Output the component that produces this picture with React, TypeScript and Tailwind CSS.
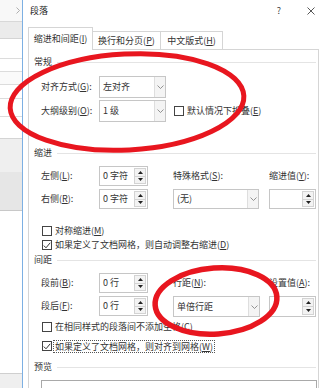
import React from "react";

const U = ({ c }: { c: string }) => (
  <span className="underline decoration-[0.5px] underline-offset-[1px]">{c}</span>
);

function Chevron() {
  return (
    <svg width="7" height="4" viewBox="0 0 7 4">
      <polyline points="0.5,0.5 3.5,3.5 6.5,0.5" fill="none" stroke="#7a7a7a" strokeWidth="0.8" />
    </svg>
  );
}

function Dropdown({ value, className }: { value: string; className: string }) {
  return (
    <div className={`flex border border-[#c6c6c6] bg-white ${className}`}>
      <div className="flex-1 flex items-center pl-[3px] whitespace-nowrap">{value}</div>
      <div className="w-[11px] flex items-center justify-center border-l border-[#dedede] bg-[#f4f4f4]">
        <Chevron />
      </div>
    </div>
  );
}

function Spin({ value, className }: { value: string; className: string }) {
  return (
    <div className={`flex border border-[#c6c6c6] bg-white ${className}`}>
      <div className="flex-1 flex items-center pl-[3px] whitespace-nowrap">{value}</div>
      <div className="w-[12px] my-[1px] mr-[1px] flex flex-col border border-[#d3d3d3] bg-[#f3f3f3]">
        <div className="flex-1 flex items-center justify-center border-b border-[#d3d3d3]">
          <svg width="5" height="3" viewBox="0 0 5 3">
            <polygon points="2.5,0 5,3 0,3" fill="#222" />
          </svg>
        </div>
        <div className="flex-1 flex items-center justify-center">
          <svg width="5" height="3" viewBox="0 0 5 3">
            <polygon points="0,0 5,0 2.5,3" fill="#222" />
          </svg>
        </div>
      </div>
    </div>
  );
}

function Check({ checked }: { checked?: boolean }) {
  return (
    <div className="w-[10px] h-[10px] shrink-0 border border-[#444] bg-white flex items-center justify-center">
      {checked && (
        <svg width="8" height="7" viewBox="0 0 8 7">
          <polyline points="0.8,3.6 3,5.8 7.2,0.8" fill="none" stroke="#333" strokeWidth="1" />
        </svg>
      )}
    </div>
  );
}

function Section({ title, className }: { title: string; className: string }) {
  return (
    <div className={`flex items-center pl-[5px] pr-[2px] ${className}`}>
      <span className="text-[#333]">{title}</span>
      <div className="flex-1 h-px bg-[#e4e4e4] ml-[5px]" />
    </div>
  );
}

function LeftStrip() {
  return (
    <div className="w-[22px] shrink-0 flex flex-col bg-[#f0f0f0]">
      <div className="h-[22px] shrink-0 bg-[#f8f8f8] border-b border-[#d8d8d8] flex items-center justify-end pr-[2px]">
        <svg width="4" height="7" viewBox="0 0 4 7">
          <polyline points="0.5,0.5 3.5,3.5 0.5,6.5" fill="none" stroke="#9a9a9a" strokeWidth="0.8" />
        </svg>
      </div>
      <div className="h-[17px] shrink-0 bg-[#ebebeb] border-b border-[#d4d4d4]" />
      <div className="h-[20px] shrink-0 bg-white border-b border-[#dcdcdc]" />
      <div className="h-[13px] shrink-0 bg-white border-b border-[#dcdcdc]" />
      <div className="h-[13px] shrink-0 bg-[#fafafa] border-b border-[#dcdcdc]" />
      <div className="h-[14px] shrink-0 bg-white border-b border-[#dcdcdc]" />
      <div className="h-[18px] shrink-0 bg-white border-b border-[#dcdcdc]" />
      <div className="h-[22px] shrink-0 bg-white border-b border-[#d4d4d4]" />
      <div className="h-[33px] shrink-0 bg-[#efefef]" />
      <div className="h-[39px] shrink-0 bg-[#e6e6e6] border-b border-[#c8c8c8]" />
      <div className="h-[163px] shrink-0 bg-white border-b border-[#cfcfcf]" />
      <div className="flex-1 bg-[#efefef]" />
    </div>
  );
}

export default function App() {
  return (
    <div className="relative w-[322px] h-[388px] overflow-hidden bg-white flex font-['Noto_Sans_CJK_SC','Microsoft_YaHei',sans-serif] text-[9px] leading-[12px] text-[#333]">
      <LeftStrip />
      <div className="w-px shrink-0 bg-[#7db0e3]" />
      <div className="flex flex-col w-[299px] shrink-0">
        {/* title bar */}
        <div className="h-[27px] shrink-0 flex items-start pt-[5px] pl-[7px] pr-[7px]">
          <span className="text-[#222]">段落</span>
          <span className="ml-auto text-[#444]">?</span>
          <svg className="ml-[26px] mt-[2px]" width="8" height="8" viewBox="0 0 8 8">
            <line x1="0.5" y1="0.5" x2="7.5" y2="7.5" stroke="#444" strokeWidth="0.9" />
            <line x1="7.5" y1="0.5" x2="0.5" y2="7.5" stroke="#444" strokeWidth="0.9" />
          </svg>
        </div>
        {/* tabs */}
        <div className="h-[22px] shrink-0 flex items-end pl-[5px] relative z-10">
          <div className="h-[23px] w-[65px] -mb-px border border-b-0 border-[#d5d5d5] bg-white flex items-center justify-center whitespace-nowrap">
            缩进和间距(<U c="I" />)
          </div>
          <div className="h-[18px] w-[68px] border-t border-r border-[#d5d5d5] bg-white flex items-center justify-center whitespace-nowrap">
            换行和分页(<U c="P" />)
          </div>
          <div className="h-[18px] w-[62px] border-t border-r border-[#d5d5d5] bg-white flex items-center justify-center whitespace-nowrap">
            中文版式(<U c="H" />)
          </div>
        </div>
        {/* panel */}
        <div className="ml-[5px] w-[291px] h-[400px] shrink-0 border border-[#d5d5d5] bg-white flex flex-col">
          <Section title="常规" className="h-[24px]" />
          <div className="mt-[2px] flex items-center h-[22px] pl-[12px]">
            <div className="w-[58px] whitespace-nowrap">
              对齐方式(<U c="G" />):
            </div>
            <Dropdown value="左对齐" className="w-[67px] h-[22px]" />
          </div>
          <div className="mt-[2px] flex items-center h-[22px] pl-[12px]">
            <div className="w-[58px] whitespace-nowrap">
              大纲级别(<U c="O" />):
            </div>
            <Dropdown value="1 级" className="w-[67px] h-[22px]" />
            <div className="ml-[8px]">
              <Check />
            </div>
            <span className="ml-[3px] whitespace-nowrap">
              默认情况下折叠(<U c="E" />)
            </span>
          </div>

          <Section title="缩进" className="mt-[24px] h-[14px]" />
          <div className="mt-[6px] flex pl-[12px]">
            <div className="flex flex-col gap-[3px]">
              <div className="flex h-[20px] items-center">
                <div className="w-[58px] whitespace-nowrap">
                  左侧(<U c="L" />):
                </div>
                <Spin value="0 字符" className="w-[49px] h-[20px]" />
              </div>
              <div className="flex h-[20px] items-center">
                <div className="w-[58px] whitespace-nowrap">
                  右侧(<U c="R" />):
                </div>
                <Spin value="0 字符" className="w-[49px] h-[20px]" />
              </div>
            </div>
            <div className="flex flex-col gap-[3px] ml-[25px]">
              <div className="h-[20px] flex items-center whitespace-nowrap">
                特殊格式(<U c="S" />):
              </div>
              <Dropdown value="(无)" className="w-[86px] h-[20px]" />
            </div>
            <div className="flex flex-col gap-[3px] ml-[10px]">
              <div className="h-[20px] flex items-center whitespace-nowrap">
                缩进值(<U c="Y" />):
              </div>
              <Spin value="" className="w-[47px] h-[20px]" />
            </div>
          </div>
          <div className="mt-[15px] h-[14px] flex items-center pl-[13px] gap-[3px]">
            <Check />
            <span className="whitespace-nowrap">
              对称缩进(<U c="M" />)
            </span>
          </div>
          <div className="h-[14px] flex items-center pl-[13px] gap-[3px]">
            <Check checked />
            <span className="whitespace-nowrap">
              如果定义了文档网格，则自动调整右缩进(<U c="D" />)
            </span>
          </div>

          <Section title="间距" className="mt-[1px] h-[14px]" />
          <div className="mt-[6px] flex pl-[12px]">
            <div className="flex flex-col gap-[3px]">
              <div className="flex h-[20px] items-center">
                <div className="w-[58px] whitespace-nowrap">
                  段前(<U c="B" />):
                </div>
                <Spin value="0 行" className="w-[49px] h-[20px]" />
              </div>
              <div className="flex h-[20px] items-center">
                <div className="w-[58px] whitespace-nowrap">
                  段后(<U c="F" />):
                </div>
                <Spin value="0 行" className="w-[49px] h-[20px]" />
              </div>
            </div>
            <div className="flex flex-col gap-[3px] ml-[25px]">
              <div className="h-[20px] flex items-center whitespace-nowrap">
                行距(<U c="N" />):
              </div>
              <Dropdown value="单倍行距" className="w-[87px] h-[21px]" />
            </div>
            <div className="flex flex-col gap-[3px] ml-[9px]">
              <div className="h-[20px] flex items-center whitespace-nowrap">
                设置值(<U c="A" />):
              </div>
              <Spin value="" className="w-[47px] h-[21px]" />
            </div>
          </div>
          <div className="mt-[3px] h-[14px] flex items-center pl-[13px] gap-[3px]">
            <Check />
            <span className="whitespace-nowrap">
              在相同样式的段落间不添加空格(<U c="C" />)
            </span>
          </div>
          <div className="mt-[5px] h-[14px] flex items-center pl-[13px] gap-[1px]">
            <Check checked />
            <span className="whitespace-nowrap border border-dotted border-[#555] px-[1px] leading-[11px]">
              如果定义了文档网格，则对齐到网格(<U c="W" />)
            </span>
          </div>

          <Section title="预览" className="mt-[7px] h-[14px]" />
          <div className="mt-[6px] ml-[12px] mr-[1px] h-[60px] shrink-0 border border-[#a9a9a9] bg-white" />
        </div>
      </div>

      <svg
        className="absolute inset-0 pointer-events-none"
        width="322"
        height="388"
        viewBox="0 0 322 388"
      >
        <ellipse
          cx="127"
          cy="102"
          rx="117"
          ry="48"
          transform="rotate(-3 127 102)"
          fill="none"
          stroke="#e8161f"
          strokeWidth="5"
        />
        <ellipse
          cx="216"
          cy="301"
          rx="61"
          ry="33"
          transform="rotate(-4 216 301)"
          fill="none"
          stroke="#e8161f"
          strokeWidth="5.5"
        />
      </svg>
    </div>
  );
}
